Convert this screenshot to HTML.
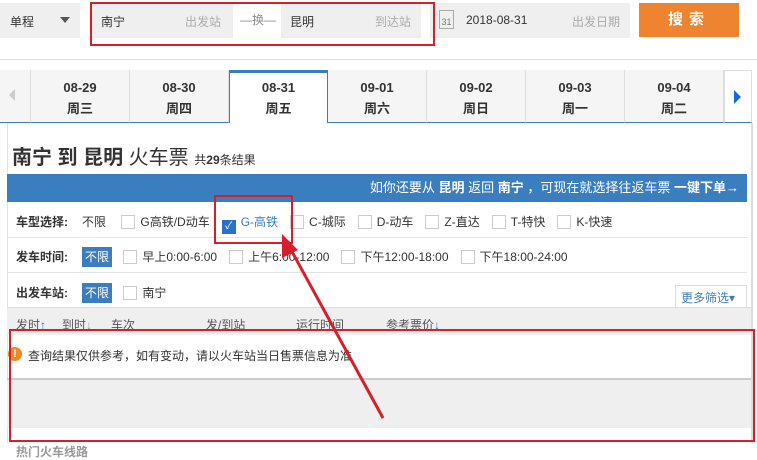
<!DOCTYPE html>
<html><head><meta charset="utf-8"><style>
*{margin:0;padding:0;box-sizing:border-box}
body{width:757px;height:452px;overflow:hidden;background:#fff;font-family:"Liberation Sans","Noto Sans CJK SC",sans-serif;font-size:12px;color:#333;position:relative}
.a{position:absolute}
.fld{background:#efefef;height:35px;top:3px}
.ph{color:#aaa;font-size:12px}
.tab{position:absolute;top:70px;height:53px;width:99px;border-right:1px solid #ddd;background:#f5f5f5;text-align:center;font-weight:bold;font-size:13px;line-height:21px;padding-top:7px;border-bottom:1px solid #3b7ec0}
.cb{display:inline-block;width:14px;height:14px;border:1px solid #ccc;background:#fff;vertical-align:-3px;margin-right:5px}
.row{position:absolute;left:16px;font-size:12px;white-space:nowrap}
.row b{font-weight:bold;margin-right:14px}
.sel{background:#3b7ec0;color:#fff;padding:3px 3px}
.opt{margin-right:12px}
</style></head><body>
<div class="a fld" style="left:0;width:80px;"><span class="a" style="left:10px;top:10px">单程</span><span class="a" style="left:60px;top:14px;border:5px solid transparent;border-top:6px solid #555"></span></div>
<div class="a fld" style="left:92px;width:141px"><span class="a" style="left:9px;top:10px">南宁</span><span class="a ph" style="left:93px;top:10px">出发站</span></div>
<span class="a" style="left:240px;top:11px;color:#888">—换—</span>
<div class="a fld" style="left:281px;width:140px"><span class="a" style="left:9px;top:10px">昆明</span><span class="a ph" style="left:94px;top:10px">到达站</span></div>
<div class="a fld" style="left:430px;width:200px"><span class="a" style="left:9px;top:7px;width:15px;height:19px;border:1px solid #aaa;font-size:9px;color:#777;text-align:center;padding-top:6px">31</span><span class="a" style="left:36px;top:10px">2018-08-31</span><span class="a ph" style="left:142px;top:10px">出发日期</span></div>
<div class="a" style="left:639px;top:3px;width:100px;height:34px;background:#ee8330;color:#fff;font-weight:bold;font-size:15px;text-align:center;line-height:34px;letter-spacing:6px">搜索</div>
<div class="a" style="left:90px;top:2px;width:345px;height:44px;border:2px solid #d4202a"></div>
<div class="a" style="left:0;top:59px;width:757px;height:1px;background:#ddd"></div>
<div class="a" style="left:0;top:70px;width:31px;height:53px;background:#f5f5f5;border-right:1px solid #ddd;border-bottom:1px solid #3b7ec0"><span class="a" style="left:9px;top:19px;border:6px solid transparent;border-right:6px solid #ccc;border-left:0"></span></div>
<div class="tab" style="left:31px">08-29<br>周三</div>
<div class="tab" style="left:130px">08-30<br>周四</div>
<div class="tab" style="left:229px;background:#fff;border:1px solid #3b7ec0;border-top:3px solid #3b7ec0;border-bottom:none;padding-top:4px">08-31<br>周五</div>
<div class="tab" style="left:328px">09-01<br>周六</div>
<div class="tab" style="left:427px">09-02<br>周日</div>
<div class="tab" style="left:526px">09-03<br>周一</div>
<div class="tab" style="left:625px">09-04<br>周二</div>
<div class="a" style="left:724px;top:70px;width:28px;height:53px;background:#fff;border:1px solid #ddd;border-bottom:1px solid #3b7ec0"><span class="a" style="left:9px;top:19px;border:7px solid transparent;border-left:7px solid #1a6ad0;border-right:0"></span></div>
<div class="a" style="left:7px;top:123px;width:1px;height:320px;background:#d6e3f0"></div>
<div class="a" style="left:751px;top:123px;width:2px;height:320px;background:#ddd"></div>
<div class="a" style="left:12px;top:141px;font-size:20px;white-space:nowrap"><b>南宁 到 昆明</b> 火车票 <span style="font-size:12px">共<b>29</b>条结果</span></div>
<div class="a" style="left:7px;top:174px;width:740px;height:28px;background:#3b7ec0;color:#fff;font-size:13px;text-align:right;line-height:28px;padding-right:8px">如你还要从 <b>昆明</b> 返回 <b>南宁</b> ，可现在就选择往返车票 <b>一键下单→</b></div>
<div class="row" style="top:213px"><b>车型选择:</b><span class="opt">不限</span> <span class="opt"><span class="cb"></span>G高铁/D动车</span><span class="opt" style="color:#3b7ec0"><span class="cb" style="background:#2a72c4;border-color:#2a72c4;color:#fff;font-size:10px;line-height:12px;text-align:center">✓</span>G-高铁</span><span class="opt"><span class="cb"></span>C-城际</span><span class="opt"><span class="cb"></span>D-动车</span><span class="opt"><span class="cb"></span>Z-直达</span><span class="opt"><span class="cb"></span>T-特快</span><span class="opt"><span class="cb"></span>K-快速</span></div>
<div class="a" style="left:7px;top:237px;width:740px;height:1px;background:#e5e5e5"></div>
<div class="row" style="top:248px"><b>发车时间:</b><span class="sel">不限</span> <span class="opt" style="margin-left:8px"><span class="cb"></span>早上0:00-6:00</span><span class="opt"><span class="cb"></span>上午6:00-12:00</span><span class="opt"><span class="cb"></span>下午12:00-18:00</span><span class="opt"><span class="cb"></span>下午18:00-24:00</span></div>
<div class="a" style="left:7px;top:272px;width:740px;height:1px;background:#e5e5e5"></div>
<div class="row" style="top:284px"><b>出发车站:</b><span class="sel">不限</span> <span class="opt" style="margin-left:8px"><span class="cb"></span>南宁</span></div>
<div class="a" style="left:675px;top:285px;width:72px;height:22px;border:1px solid #ddd;border-bottom:none;color:#3b7ec0;padding:3px 0 0 5px">更多筛选▾</div>
<div class="a" style="left:7px;top:307px;width:744px;height:28px;background:#efefef;border-top:1px solid #ddd"></div>
<div class="a" style="left:16px;top:316px;white-space:nowrap;color:#555">发时<span style="color:#2a72c4">↑</span></div>
<div class="a" style="left:62px;top:316px;color:#555">到时<span style="color:#999">↓</span></div>
<div class="a" style="left:111px;top:316px;color:#555">车次</div>
<div class="a" style="left:206px;top:316px;color:#555">发/到站</div>
<div class="a" style="left:296px;top:316px;color:#555">运行时间</div>
<div class="a" style="left:386px;top:316px;color:#555">参考票价<span style="color:#2a72c4">↓</span></div>
<div class="a" style="left:8px;top:347px;width:14px;height:14px;border-radius:50%;background:#ee8a20;color:#fff;font-weight:bold;font-size:11px;text-align:center;line-height:14px">!</div>
<div class="a" style="left:28px;top:347px;color:#333">查询结果仅供参考，如有变动，请以火车站当日售票信息为准</div>
<div class="a" style="left:7px;top:378px;width:744px;height:2px;background:#ccc"></div>
<div class="a" style="left:7px;top:380px;width:744px;height:48px;background:#efefef"></div>
<div class="a" style="left:16px;top:443px;color:#999;font-weight:bold">热门火车线路</div>
<div class="a" style="left:9px;top:329px;width:746px;height:113px;border:2px solid #d4202a"></div>
<div class="a" style="left:214px;top:195px;width:79px;height:49px;border:2px solid #d4202a"></div>
<svg class="a" style="left:0;top:0" width="757" height="452"><line x1="383" y1="418" x2="290" y2="248" stroke="#d4202a" stroke-width="3"/><polygon points="282,234 282,258 298,250" fill="#d4202a"/></svg>
</body></html>
